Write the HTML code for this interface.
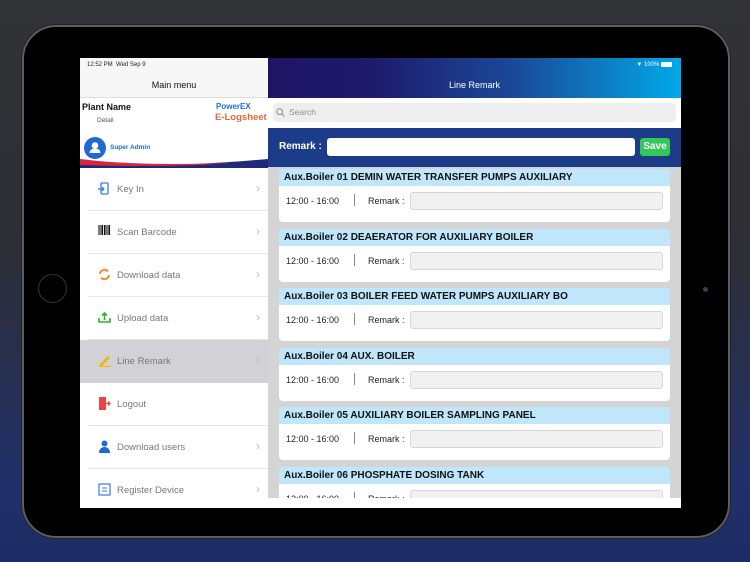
<!DOCTYPE html>
<html><head><meta charset="utf-8"><style>
*{margin:0;padding:0;box-sizing:border-box}
body{width:750px;height:562px;overflow:hidden;position:relative;font-family:"Liberation Sans",sans-serif;background:linear-gradient(180deg,#323336 0%,#2d2f36 45%,#22306a 85%,#1e2c66 100%)}
.dev{position:absolute;left:22px;top:25px;width:708px;height:513px;border-radius:34px;background:#000;border:2px solid #5a5d63;box-shadow:0 0 0 1px #222}
.scr{position:absolute;left:80px;top:58px;width:601px;height:450px;background:#fff;overflow:hidden}
.left{position:absolute;left:0;top:0;width:188px;height:450px;background:#fff}
.lh{height:40px;background:#f7f7f7;border-bottom:1px solid #ddd;position:relative}
.t{position:absolute;font-size:6px;color:#222}
.card{position:absolute;left:0;top:40px;width:188px;height:70px;background:#fff;overflow:hidden}
.mi{position:absolute;left:8px;width:180px;height:43px;border-bottom:1px solid #e6e6e6;font-size:9.5px;color:#777}
.mi span{position:absolute;left:29px;top:16px}
.mi i{position:absolute;right:8px;top:13px;font-style:normal;color:#bbb;font-size:12px}
.mi svg{position:absolute;left:10px;top:14px}
.right{position:absolute;left:188px;top:0;width:413px;height:450px;background:#d4d4d4}
.rh{height:40px;background:linear-gradient(90deg,#1f1566 0%,#1e1a6c 25%,#1a4a98 60%,#00a9e8 100%);position:relative;color:#fff}
.sb{height:30px;background:#fff;position:relative}
.rb{height:39px;background:#1c3b89;position:relative}
.c{position:absolute;left:11px;width:391px;height:53px;background:#fff;border-radius:4px;overflow:hidden}
.c .h{height:17px;background:#bfe6fb;font-weight:bold;font-size:10px;padding:3px 0 0 5px;color:#111}
.c .b{position:relative;height:36px;font-size:9px;color:#222}
.c .b .tm{position:absolute;left:7px;top:10px}
.c .b .sp{position:absolute;left:75px;top:8px;width:1px;height:12px;background:#888}
.c .b .rk{position:absolute;left:89px;top:10px}
.c .b .in{position:absolute;left:131px;top:6px;width:253px;height:18px;background:#f1f1f1;border:1px solid #d6d6d6;border-radius:3px}
</style></head><body>
<div class="dev"></div>
<div style="position:absolute;left:38px;top:274px;width:29px;height:29px;border-radius:50%;border:1.5px solid #333"></div>
<div style="position:absolute;left:703px;top:287px;width:5px;height:5px;border-radius:50%;background:#3a3f5a"></div>
<div class="scr">
<div class="left">
<div class="lh"><div class="t" style="left:7px;top:4px">12:52 PM&nbsp;&nbsp;Wed Sep 9</div><div style="position:absolute;left:0;width:188px;text-align:center;top:22px;font-size:9px;color:#111">Main menu</div></div>
<div class="card">
<div style="position:absolute;left:2px;top:4px;font-size:9px;font-weight:bold;color:#111">Plant Name</div>
<div style="position:absolute;left:17px;top:19px;font-size:6.5px;color:#555">Detail</div>
<div style="position:absolute;left:136px;top:4px;font-size:8px;font-weight:bold;color:#1e6fd0">PowerEX</div>
<div style="position:absolute;left:135px;top:14px;font-size:9.5px;font-weight:bold;color:#e26a3a">E-Logsheet</div>
<svg style="position:absolute;left:0;top:50px" width="188" height="20" viewBox="0 0 188 20"><path d="M0 16 C60 19 120 17 188 11 L188 20 L0 20Z" fill="#1e2a78"/><path d="M0 11 C40 16 90 17 150 15 C120 18 60 19 0 17Z" fill="#d7263d"/></svg>
<div style="position:absolute;left:4px;top:39px;width:22px;height:22px;border-radius:50%;background:#1e6ad0"><svg width="22" height="22" viewBox="0 0 22 22"><circle cx="11" cy="8.5" r="3.3" fill="#fff"/><path d="M5.5 16c0-3 2.5-4.5 5.5-4.5s5.5 1.5 5.5 4.5z" fill="#fff"/></svg></div>
<div style="position:absolute;left:30px;top:46px;font-size:6.5px;font-weight:bold;color:#1e6ad0">Super Admin</div>
</div>
<div class="mi" style="top:110px"><svg width="12" height="13" viewBox="0 0 12 13"><rect x="3" y="1" width="7" height="11" rx="1" fill="none" stroke="#3a7be0" stroke-width="1.3"/><path d="M0 7h6M4 5l2 2-2 2" stroke="#3a7be0" fill="none" stroke-width="1.2"/></svg><span>Key In</span><i>›</i></div>
<div class="mi" style="top:153px"><svg width="13" height="12" viewBox="0 0 13 12"><path d="M1 0v10M3 0v10M4.5 0v10M6.5 0v10M8 0v10M10 0v10M11.5 0v10" stroke="#111" stroke-width="1.1"/></svg><span>Scan Barcode</span><i>›</i></div>
<div class="mi" style="top:196px"><svg width="13" height="13" viewBox="0 0 13 13"><path d="M2 6a4.5 4.5 0 0 1 8-2.5M11 7a4.5 4.5 0 0 1-8 2.5" stroke="#f0902a" stroke-width="2" fill="none"/></svg><span>Download data</span><i>›</i></div>
<div class="mi" style="top:239px"><svg width="13" height="13" viewBox="0 0 13 13"><path d="M1 7v4h11V7" stroke="#2bb52b" stroke-width="1.6" fill="none"/><path d="M6.5 9V2M4 4.5l2.5-2.5 2.5 2.5" stroke="#2bb52b" stroke-width="1.6" fill="none"/></svg><span>Upload data</span><i>›</i></div>
<div class="mi" style="top:282px;left:0;width:188px;background:#d1d1d6;border:none"><svg style="left:18px" width="14" height="13" viewBox="0 0 14 13"><path d="M1 11L10 2l2 2-9 9" fill="#f2b705"/><path d="M1 12.5h12" stroke="#f2b705" stroke-width="1.2"/></svg><span style="left:37px">Line Remark</span><i style="right:8px">›</i></div>
<div class="mi" style="top:325px"><svg width="13" height="13" viewBox="0 0 13 13"><rect x="1" y="0" width="7" height="13" fill="#e84545"/><path d="M8 6.5h4M10 4.5l2 2-2 2" stroke="#e84545" stroke-width="1.3" fill="none"/></svg><span>Logout</span></div>
<div class="mi" style="top:368px"><svg width="13" height="13" viewBox="0 0 13 13"><circle cx="6.5" cy="3.5" r="3" fill="#1e6ad0"/><path d="M1 13c0-4 2.5-6 5.5-6s5.5 2 5.5 6z" fill="#1e6ad0"/></svg><span>Download users</span><i>›</i></div>
<div class="mi" style="top:411px;border:none"><svg width="13" height="13" viewBox="0 0 13 13"><rect x="1" y="1" width="11" height="11" fill="none" stroke="#3a7be0" stroke-width="1.2"/><path d="M4 5h5M4 8h5" stroke="#3a7be0"/></svg><span>Register Device</span><i>›</i></div>
</div>
<div class="right">
<div class="rh"><div style="position:absolute;right:9px;top:4px;font-size:6px">&#9660; 100% <span style="display:inline-block;width:11px;height:5px;background:#fff;vertical-align:middle"></span></div><div style="position:absolute;width:100%;text-align:center;top:22px;font-size:9px">Line Remark</div></div>
<div class="sb"><div style="position:absolute;left:5px;top:5px;width:403px;height:19px;background:#eeeef0;border-radius:5px;font-size:8.5px;color:#8e8e93;padding:4px 0 0 16px">Search</div><svg style="position:absolute;left:8px;top:10px" width="9" height="9" viewBox="0 0 9 9"><circle cx="3.7" cy="3.7" r="2.9" stroke="#8e8e93" fill="none"/><path d="M6 6l2.5 2.5" stroke="#8e8e93"/></svg></div>
<div class="rb"><div style="position:absolute;left:11px;top:13px;color:#fff;font-weight:bold;font-size:10px">Remark :</div><div style="position:absolute;left:59px;top:10px;width:308px;height:18px;background:#fff;border-radius:3px"></div><div style="position:absolute;left:372px;top:10px;width:30px;height:18px;background:#34c759;border-radius:3px;color:#fff;font-weight:bold;font-size:10px;text-align:center;padding-top:3px">Save</div></div>
<div class="c" style="top:111px"><div class="h">Aux.Boiler 01 DEMIN WATER TRANSFER PUMPS AUXILIARY</div><div class="b"><span class="tm">12:00 - 16:00</span><div class="sp"></div><span class="rk">Remark :</span><div class="in"></div></div></div>
<div class="c" style="top:170.5px"><div class="h">Aux.Boiler 02 DEAERATOR FOR AUXILIARY BOILER</div><div class="b"><span class="tm">12:00 - 16:00</span><div class="sp"></div><span class="rk">Remark :</span><div class="in"></div></div></div>
<div class="c" style="top:230px"><div class="h">Aux.Boiler 03 BOILER FEED WATER PUMPS AUXILIARY BO</div><div class="b"><span class="tm">12:00 - 16:00</span><div class="sp"></div><span class="rk">Remark :</span><div class="in"></div></div></div>
<div class="c" style="top:289.5px"><div class="h">Aux.Boiler 04 AUX. BOILER</div><div class="b"><span class="tm">12:00 - 16:00</span><div class="sp"></div><span class="rk">Remark :</span><div class="in"></div></div></div>
<div class="c" style="top:349px"><div class="h">Aux.Boiler 05 AUXILIARY BOILER SAMPLING PANEL</div><div class="b"><span class="tm">12:00 - 16:00</span><div class="sp"></div><span class="rk">Remark :</span><div class="in"></div></div></div>
<div class="c" style="top:408.5px"><div class="h">Aux.Boiler 06 PHOSPHATE DOSING TANK</div><div class="b"><span class="tm">12:00 - 16:00</span><div class="sp"></div><span class="rk">Remark :</span><div class="in"></div></div></div>
<div style="position:absolute;left:0;top:440px;width:413px;height:10px;background:#fff"></div>
</div>
</div>
</body></html>
